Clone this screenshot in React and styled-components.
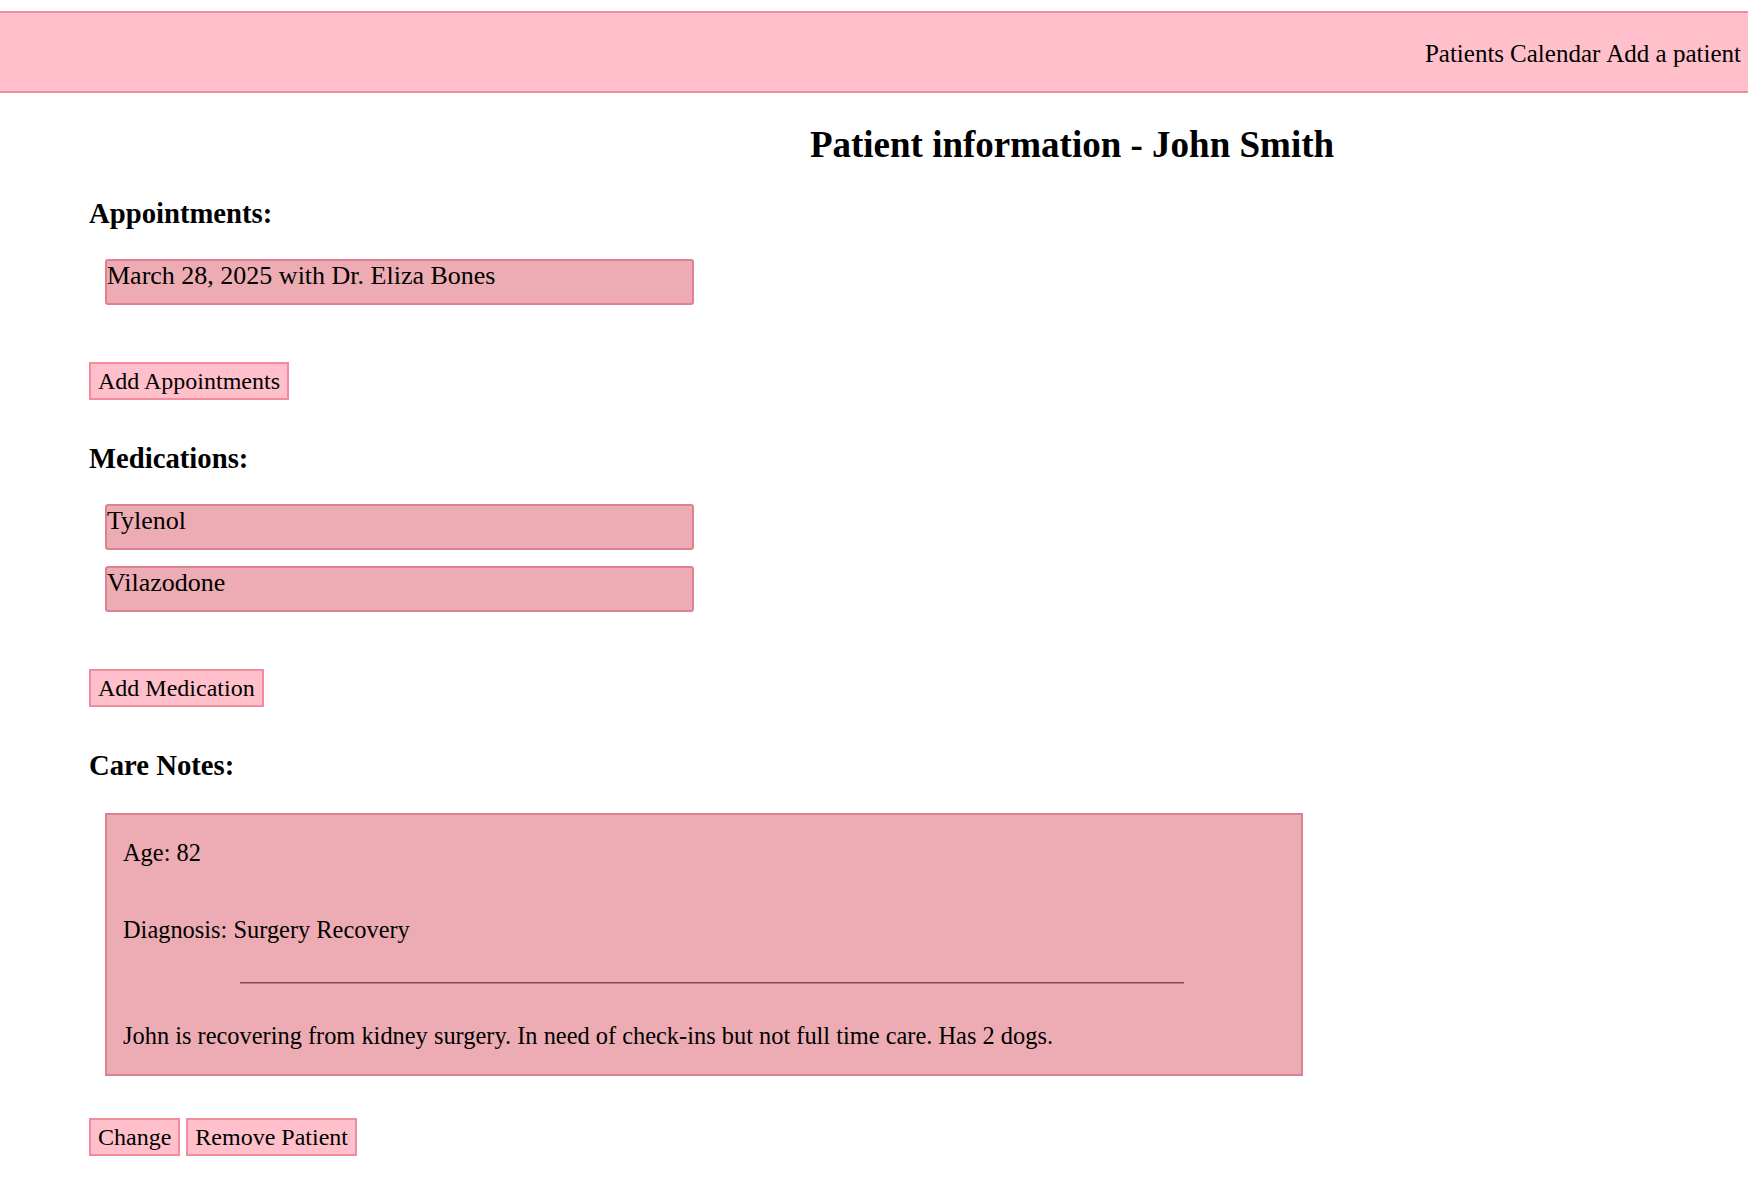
import styled, { createGlobalStyle } from 'styled-components';

const GlobalStyle = createGlobalStyle`
  html, body {
    margin: 0;
    padding: 0;
    background: #ffffff;
    color: #000000;
    font-family: "Liberation Serif", "Times New Roman", serif;
  }
`;

const NavBar = styled.nav`
  box-sizing: border-box;
  margin-top: 11px;
  height: 82px;
  padding: 3px 7px 0 0;
  background: #ffc0cb;
  border-top: 2px solid #f48b9c;
  border-bottom: 2px solid #f48b9c;
  display: flex;
  justify-content: flex-end;
  align-items: center;
  gap: 6px;
`;

const NavLink = styled.a`
  font-size: 25px;
  color: #000;
  text-decoration: none;
  cursor: pointer;
`;

const Main = styled.main`
  padding: 0 0 40px 89px;
`;

const Title = styled.h1`
  margin: 31px 0 31px;
  padding-left: 307px;
  text-align: center;
  font-size: 37px;
  line-height: 42px;
  font-weight: bold;
`;

const SectionTitle = styled.h3`
  margin: ${(p) => (p.$first ? '0' : '42px')} 0 0;
  font-size: 28.7px;
  line-height: 33px;
  font-weight: bold;
`;

const ItemList = styled.div`
  display: flex;
  flex-direction: column;
  gap: 16px;
  margin: 29px 0 0 16px;
`;

const Item = styled.div`
  box-sizing: border-box;
  width: 589px;
  height: 46px;
  background: #edacb3;
  border: 2px solid #de8092;
  border-radius: 3px;
  font-size: 26px;
  line-height: 30px;
`;

const Button = styled.button`
  box-sizing: border-box;
  font-family: "Liberation Serif", "Times New Roman", serif;
  font-size: 24px;
  line-height: 28px;
  color: #000;
  background: #ffc0cb;
  border: 2px solid #f48b9c;
  border-radius: 0;
  padding: 3px 7px;
  cursor: pointer;
`;

const ButtonRow = styled.div`
  display: flex;
  gap: 6px;
  margin-top: ${(p) => p.$top || 57}px;
`;

const NotesBox = styled.div`
  box-sizing: border-box;
  width: 1198px;
  margin: 31px 0 0 16px;
  padding: 24px 16px;
  background: #edacb3;
  border: 2px solid #de8092;
  display: flex;
  flex-direction: column;
  font-size: 24.4px;
  line-height: 28px;
`;

const NoteLine = styled.p`
  margin: ${(p) => p.$top || 0}px 0 0;
`;

const Divider = styled.hr`
  width: 944px;
  margin: 38px 0 38px 117px;
  border: none;
  border-top: 1px solid #8a4853;
  border-bottom: 1px solid #c27a86;
  height: 0;
`;

const appointments = ['March 28, 2025 with Dr. Eliza Bones'];
const medications = ['Tylenol', 'Vilazodone'];

export default function App() {
  return (
    <>
      <GlobalStyle />
      <NavBar>
        <NavLink>Patients</NavLink>
        <NavLink>Calendar</NavLink>
        <NavLink>Add a patient</NavLink>
      </NavBar>
      <Main>
        <Title>Patient information - John Smith</Title>

        <SectionTitle $first>Appointments:</SectionTitle>
        <ItemList>
          {appointments.map((a) => (
            <Item key={a}>{a}</Item>
          ))}
        </ItemList>
        <ButtonRow>
          <Button>Add Appointments</Button>
        </ButtonRow>

        <SectionTitle>Medications:</SectionTitle>
        <ItemList>
          {medications.map((m) => (
            <Item key={m}>{m}</Item>
          ))}
        </ItemList>
        <ButtonRow>
          <Button>Add Medication</Button>
        </ButtonRow>

        <SectionTitle>Care Notes:</SectionTitle>
        <NotesBox>
          <NoteLine>Age: 82</NoteLine>
          <NoteLine $top={49}>Diagnosis: Surgery Recovery</NoteLine>
          <Divider />
          <NoteLine>
            John is recovering from kidney surgery. In need of check-ins but not full time care. Has 2 dogs.
          </NoteLine>
        </NotesBox>
        <ButtonRow $top={42}>
          <Button>Change</Button>
          <Button>Remove Patient</Button>
        </ButtonRow>
      </Main>
    </>
  );
}
